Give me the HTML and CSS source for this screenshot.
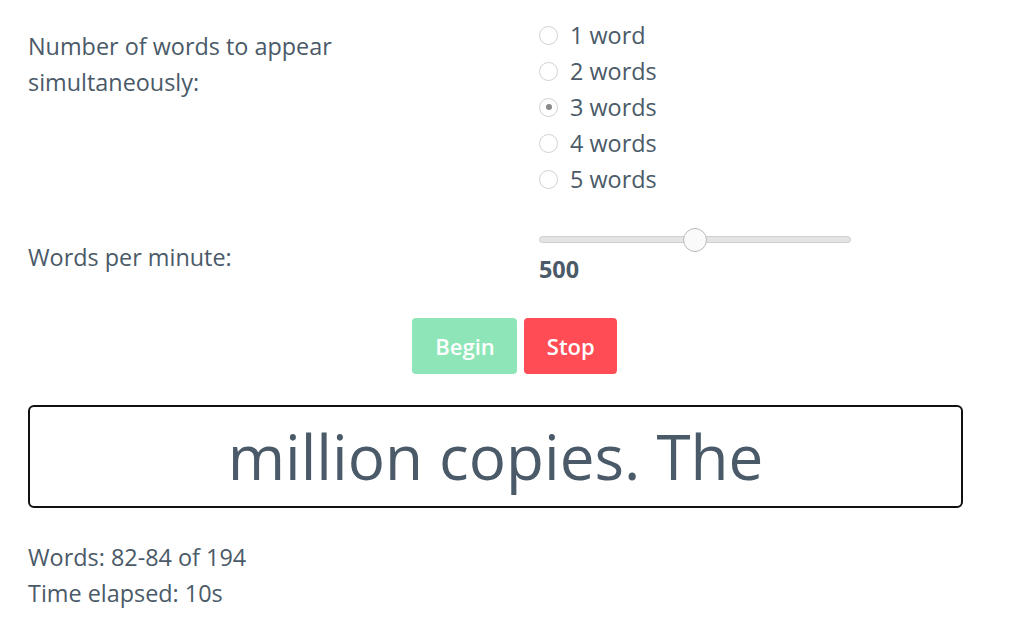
FILE: index.html
```html
<!DOCTYPE html>
<html lang="en">
<head>
<meta charset="utf-8">
<title>Speed reader</title>
<link rel="stylesheet" href="styles.css">
</head>
<body>
<div class="page">
  <div class="row row-words">
    <div class="label label-words">Number of words to appear<br>simultaneously:</div>
    <div class="control radios">
      <label class="radio"><input type="radio" name="n"><span class="dot"></span>1 word</label>
      <label class="radio"><input type="radio" name="n"><span class="dot"></span>2 words</label>
      <label class="radio"><input type="radio" name="n" checked><span class="dot"></span>3 words</label>
      <label class="radio"><input type="radio" name="n"><span class="dot"></span>4 words</label>
      <label class="radio"><input type="radio" name="n"><span class="dot"></span>5 words</label>
    </div>
  </div>
  <div class="row row-wpm">
    <div class="label label-wpm">Words per minute:</div>
    <div class="control">
      <input class="slider" type="range" min="0" max="1000" value="500">
      <div class="value">500</div>
    </div>
  </div>
  <div class="buttons">
    <button class="btn btn-begin">Begin</button>
    <button class="btn btn-stop">Stop</button>
  </div>
  <div class="display">million copies. The</div>
  <div class="stats">
    <div>Words: 82-84 of 194</div>
    <div>Time elapsed: 10s</div>
  </div>
</div>
</body>
</html>
```
FILE: styles.css
```css
html, body {
  margin: 0;
  padding: 0;
  background: #fff;
}
body {
  font-family: "Open Sans", "Liberation Sans", sans-serif;
  font-size: 23.4px;
  line-height: 36px;
  color: #4a5a68;
}
.page {
  padding: 17px 20px 0 28px;
}
.row {
  display: grid;
  grid-template-columns: 511px 1fr;
}
.label-words {
  padding-top: 11px;
}
.radios {
  display: flex;
  flex-direction: column;
}
.radio {
  display: flex;
  align-items: center;
  gap: 12px;
  height: 36px;
  cursor: pointer;
}
.radio input {
  display: none;
}
.dot {
  width: 19px;
  height: 19px;
  box-sizing: border-box;
  border: 1px solid #d2d2d2;
  border-radius: 50%;
  display: flex;
  align-items: center;
  justify-content: center;
  background: #fff;
}
.radio input:checked + .dot::after {
  content: "";
  width: 6px;
  height: 6px;
  border-radius: 50%;
  background: #8a8a8a;
}
.row-wpm {
  margin-top: 27px;
}
.label-wpm {
  padding-top: 15px;
}
.slider {
  -webkit-appearance: none;
  appearance: none;
  display: block;
  width: 312px;
  height: 24px;
  margin: 3px 0 0;
  background: transparent;
}
.slider::-webkit-slider-runnable-track {
  height: 7px;
  border-radius: 4px;
  background: #e4e4e4;
  border: 1px solid #cfcfcf;
  box-sizing: border-box;
}
.slider::-webkit-slider-thumb {
  -webkit-appearance: none;
  width: 24px;
  height: 24px;
  margin-top: -9px;
  border-radius: 50%;
  background: #fafafa;
  border: 1px solid #b9b9b9;
  box-sizing: border-box;
}
.value {
  font-weight: 700;
  margin-top: 0;
}
.buttons {
  display: flex;
  justify-content: center;
  gap: 7px;
  margin-top: 31px;
}
.btn {
  font-family: "Open Sans", "Liberation Sans", sans-serif;
  font-size: 22px;
  font-weight: 600;
  color: #fff;
  border: none;
  border-radius: 4px;
  height: 56px;
  padding: 0 22px 0 23px;
  cursor: pointer;
}
.btn-begin {
  background: #8ee6b8;
}
.btn-stop {
  background: #ff4c55;
}
.display {
  width: 935px;
  box-sizing: border-box;
  height: 103px;
  margin-top: 31px;
  border: 2px solid #111;
  border-radius: 6px;
  display: flex;
  align-items: center;
  justify-content: center;
  font-size: 62px;
  line-height: 1;
  padding-bottom: 2px;
}
.stats {
  margin-top: 31px;
}
```
